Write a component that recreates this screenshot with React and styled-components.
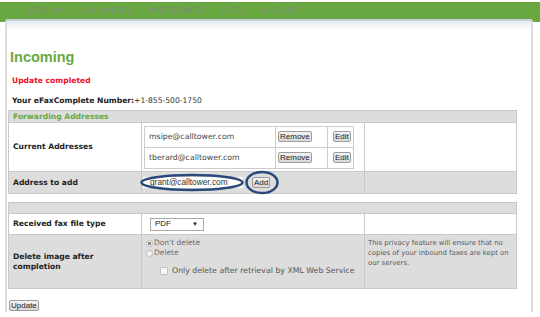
import React from 'react';
import styled, { createGlobalStyle } from 'styled-components';

const green = '#69a841';

const GlobalStyle = createGlobalStyle`
  html, body { margin: 0; padding: 0; background: #fff; }
  body {
    font-family: 'DejaVu Sans', Verdana, sans-serif;
    font-size: 7.6px;
    color: #222;
  }
`;

const NavBar = styled.nav`
  margin-top: 2px;
  height: 20px;
  background: ${green};
  display: flex;
  gap: 17px;
  padding-left: 27px;
`;

const NavItem = styled.span`
  height: 17px;
  line-height: 17px;
  font-size: 7.8px;
  color: #7e8c74;
  text-transform: uppercase;
`;

const Panel = styled.main`
  position: relative;
  margin: -3px 7px 0 5px;
  height: 293px;
  box-sizing: border-box;
  border-left: 2px solid #dcdcdc;
  border-right: 2px solid #dcdcdc;
  border-top: 2px solid #c7d1d9;
  border-radius: 3px 3px 0 0;
  background: linear-gradient(to bottom, #e4eaef 0, #fff 9px);
`;

const Heading = styled.h1`
  margin: 28px 0 0;
  padding-left: 3px;
  font-family: 'Liberation Sans', Arial, sans-serif;
  font-size: 14.5px;
  line-height: 17px;
  font-weight: bold;
  color: ${green};
`;

const Status = styled.div`
  margin-top: 10px;
  padding-left: 5px;
  line-height: 10px;
  font-weight: bold;
  color: #f0102a;
`;

const NumberLine = styled.div`
  margin-top: 10px;
  padding-left: 5px;
  line-height: 10px;
  color: #333;

  b { color: #222; }
`;

const Table = styled.table`
  width: 508px;
  margin: ${(p) => p.$top}px 0 0 1px;
  border-collapse: collapse;
  table-layout: fixed;
`;

const Col = styled.col`
  width: ${(p) => p.$w}px;
`;

const Cell = styled.td`
  border: 1px solid #c9c9c9;
  padding: ${(p) => (p.$top ? '3px' : '0')} 3px 0 ${(p) => p.$left ?? 4}px;
  height: ${(p) => p.$h}px;
  box-sizing: border-box;
  vertical-align: ${(p) => (p.$top ? 'top' : 'middle')};
  background: ${(p) => (p.$shade ? '#dddddd' : '#fff')};
  line-height: 10px;
`;

const HeaderCell = styled(Cell)`
  background: #dddddd;
  color: ${green};
  font-weight: bold;
`;

const LabelCell = styled(Cell)`
  font-weight: bold;
  color: #222;
`;

const InnerTable = styled.table`
  width: 209px;
  border-collapse: collapse;
  table-layout: fixed;
`;

const InnerCell = styled.td`
  border: 1px solid #cccccc;
  height: 20px;
  padding: 0 0 0 ${(p) => p.$left}px;
  color: #444;
  font-size: 7.8px;
  background: #fff;
`;

const Button = styled.button`
  height: 11px;
  padding: 0 1px;
  margin: 0;
  border: 1px solid #9c9c9c;
  border-radius: 2px;
  background: linear-gradient(#f3f3f3, #dadada);
  font-family: 'Liberation Sans', Arial, sans-serif;
  font-size: 8px;
  line-height: 8px;
  color: #222;
  vertical-align: middle;
`;

const AddWrap = styled.div`
  position: relative;
  display: flex;
  align-items: center;
  gap: 9px;
  height: 21px;
`;

const TextInput = styled.div`
  width: 100px;
  height: 11px;
  padding-left: 7px;
  box-sizing: border-box;
  background: #fff;
  font-family: 'Liberation Sans', Arial, sans-serif;
  font-size: 8.3px;
  line-height: 11px;
  color: #333;
`;

const Marks = styled.svg`
  position: absolute;
  left: 0;
  top: 0;
  overflow: visible;
  pointer-events: none;
`;

const Select = styled.div`
  display: inline-flex;
  justify-content: space-between;
  align-items: center;
  width: 54px;
  height: 13px;
  box-sizing: border-box;
  margin-left: 4px;
  padding: 0 5px 0 4px;
  border: 1px solid #a8a8a8;
  background: #fff;
  font-family: 'Liberation Sans', Arial, sans-serif;
  font-size: 8px;
  color: #222;

  span { font-size: 6px; }
`;

const OptionLine = styled.div`
  display: flex;
  align-items: center;
  height: 10px;
  color: #6a6a6a;
  font-size: 7.5px;
`;

const CheckLine = styled(OptionLine)`
  margin: 8px 0 0 14px;
  gap: 4px;
  color: #555;
  font-size: 7.8px;
`;

const Radio = styled.span`
  display: inline-block;
  width: 5px;
  height: 5px;
  margin-right: 1px;
  border: 1px solid #bdbdbd;
  border-radius: 50%;
  background: ${(p) =>
    p.$checked ? 'radial-gradient(circle, #8a8a8a 0 1.4px, #f4f4f4 1.9px)' : '#f4f4f4'};
`;

const Checkbox = styled.span`
  display: inline-block;
  width: 6px;
  height: 6px;
  border: 1px solid #bdbdbd;
  border-radius: 1.5px;
  background: #f6f6f6;
`;

const Note = styled.div`
  font-size: 6.9px;
  line-height: 10px;
  color: #585858;
`;

const UpdateButton = styled(Button)`
  display: block;
  margin: 11px 0 0 2px;
`;

const navItems = ['Send Fax', 'Fax Queues', 'Preferences', 'Lists', 'Account'];
const addresses = ['msipe@calltower.com', 'tberard@calltower.com'];

export default function App() {
  return (
    <>
      <GlobalStyle />
      <NavBar>
        {navItems.map((item) => (
          <NavItem key={item}>{item}</NavItem>
        ))}
      </NavBar>
      <Panel>
        <Heading>Incoming</Heading>
        <Status>Update completed</Status>
        <NumberLine>
          <b>Your eFaxComplete Number:</b>+1-855-500-1750
        </NumberLine>

        <Table $top={4}>
          <colgroup>
            <Col $w={133} />
            <Col $w={223} />
            <Col $w={152} />
          </colgroup>
          <tbody>
            <tr>
              <HeaderCell colSpan={3} $h={12}>Forwarding Addresses</HeaderCell>
            </tr>
            <tr>
              <LabelCell $h={49}>Current Addresses</LabelCell>
              <Cell $left={2}>
                <InnerTable>
                  <colgroup>
                    <Col $w={131} />
                    <Col $w={52} />
                    <Col $w={26} />
                  </colgroup>
                  <tbody>
                    {addresses.map((a) => (
                      <tr key={a}>
                        <InnerCell $left={4}>{a}</InnerCell>
                        <InnerCell $left={2}>
                          <Button>Remove</Button>
                        </InnerCell>
                        <InnerCell $left={5}>
                          <Button>Edit</Button>
                        </InnerCell>
                      </tr>
                    ))}
                  </tbody>
                </InnerTable>
              </Cell>
              <Cell />
            </tr>
            <tr>
              <LabelCell $shade $h={22}>Address to add</LabelCell>
              <Cell $shade $left={1}>
                <AddWrap>
                  <TextInput>grant@calltower.com</TextInput>
                  <Button>Add</Button>
                  <Marks width="140" height="22">
                    <ellipse cx="49" cy="10.5" rx="50.5" ry="7.5" fill="none" stroke="#29497a" strokeWidth="2.5" />
                    <ellipse cx="119" cy="10.5" rx="15.5" ry="10.5" fill="none" stroke="#29497a" strokeWidth="2.5" />
                  </Marks>
                </AddWrap>
              </Cell>
              <Cell $shade />
            </tr>
          </tbody>
        </Table>

        <Table $top={8}>
          <colgroup>
            <Col $w={133} />
            <Col $w={223} />
            <Col $w={152} />
          </colgroup>
          <tbody>
            <tr>
              <HeaderCell colSpan={3} $h={11} />
            </tr>
            <tr>
              <LabelCell $h={21}>Received fax file type</LabelCell>
              <Cell>
                <Select>
                  PDF <span>▼</span>
                </Select>
              </Cell>
              <Cell />
            </tr>
            <tr>
              <LabelCell $shade $h={54}>
                Delete image after completion
              </LabelCell>
              <Cell $shade $top>
                <OptionLine>
                  <Radio $checked />
                  Don't delete
                </OptionLine>
                <OptionLine>
                  <Radio />
                  Delete
                </OptionLine>
                <CheckLine>
                  <Checkbox />
                  Only delete after retrieval by XML Web Service
                </CheckLine>
              </Cell>
              <Cell $shade $top $left={3}>
                <Note>
                  This privacy feature will ensure that no copies of your inbound faxes are kept on our servers.
                </Note>
              </Cell>
            </tr>
          </tbody>
        </Table>

        <UpdateButton>Update</UpdateButton>
      </Panel>
    </>
  );
}
